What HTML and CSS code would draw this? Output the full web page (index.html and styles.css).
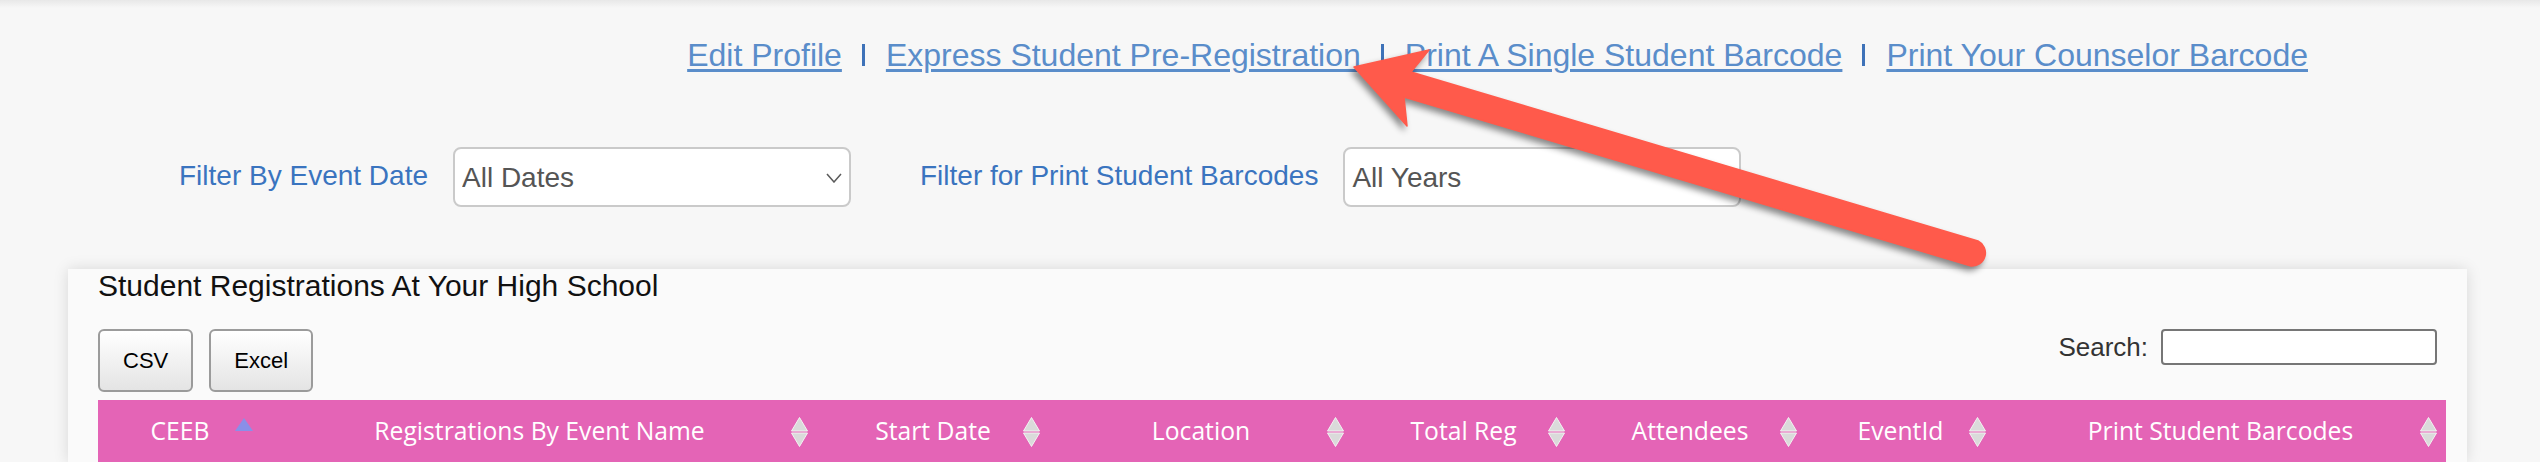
FILE: index.html
```html
<!DOCTYPE html>
<html>
<head>
<meta charset="utf-8">
<title>Counselor</title>
<link rel="stylesheet" href="styles.css">
</head>
<body>
<nav class="links">
  <a class="link" href="#">Edit Profile</a><span class="sep"></span>
  <a class="link" href="#">Express Student Pre-Registration</a><span class="sep"></span>
  <a class="link" href="#">Print A Single Student Barcode</a><span class="sep"></span>
  <a class="link" href="#">Print Your Counselor Barcode</a>
</nav>

<div class="filters">
  <label class="flabel">Filter By Event Date</label>
  <div class="selwrap">
    <select class="sel"><option>All Dates</option></select>
    <svg class="chev" viewBox="0 0 16 10" width="16" height="10"><polyline points="1,1 8,9 15,1"/></svg>
  </div>
  <label class="flabel">Filter for Print Student Barcodes</label>
  <div class="selwrap">
    <select class="sel"><option>All Years</option></select>
    <svg class="chev" viewBox="0 0 16 10" width="16" height="10"><polyline points="1,1 8,9 15,1"/></svg>
  </div>
</div>

<section class="card">
  <div class="card-title">Student Registrations At Your High School</div>
  <div class="toolbar">
    <div class="btns">
      <button class="dtbtn">CSV</button>
      <button class="dtbtn">Excel</button>
    </div>
    <label class="search"><span class="search-label">Search:</span><input class="search-input" type="search"></label>
  </div>
  <table class="grid">
    <colgroup>
      <col class="w1"><col class="w2"><col class="w3"><col class="w4">
      <col class="w5"><col class="w6"><col class="w7"><col class="w8">
    </colgroup>
    <thead>
      <tr>
        <th>CEEB<svg class="asc" viewBox="0 0 18 13" width="18" height="13"><path d="M9 0 L18 13 H0 Z"/></svg></th>
        <th>Registrations By Event Name<svg class="sort" viewBox="0 0 17 30" width="17" height="30"><path d="M8.5 0.5 L16.5 14 H0.5 Z"/><path d="M0.5 16 H16.5 L8.5 29.5 Z"/></svg></th>
        <th>Start Date<svg class="sort" viewBox="0 0 17 30" width="17" height="30"><path d="M8.5 0.5 L16.5 14 H0.5 Z"/><path d="M0.5 16 H16.5 L8.5 29.5 Z"/></svg></th>
        <th>Location<svg class="sort" viewBox="0 0 17 30" width="17" height="30"><path d="M8.5 0.5 L16.5 14 H0.5 Z"/><path d="M0.5 16 H16.5 L8.5 29.5 Z"/></svg></th>
        <th>Total Reg<svg class="sort" viewBox="0 0 17 30" width="17" height="30"><path d="M8.5 0.5 L16.5 14 H0.5 Z"/><path d="M0.5 16 H16.5 L8.5 29.5 Z"/></svg></th>
        <th>Attendees<svg class="sort" viewBox="0 0 17 30" width="17" height="30"><path d="M8.5 0.5 L16.5 14 H0.5 Z"/><path d="M0.5 16 H16.5 L8.5 29.5 Z"/></svg></th>
        <th>EventId<svg class="sort" viewBox="0 0 17 30" width="17" height="30"><path d="M8.5 0.5 L16.5 14 H0.5 Z"/><path d="M0.5 16 H16.5 L8.5 29.5 Z"/></svg></th>
        <th>Print Student Barcodes<svg class="sort" viewBox="0 0 17 30" width="17" height="30"><path d="M8.5 0.5 L16.5 14 H0.5 Z"/><path d="M0.5 16 H16.5 L8.5 29.5 Z"/></svg></th>
      </tr>
    </thead>
  </table>
</section>

<svg class="annot" viewBox="0 0 2540 462" width="2540" height="462">
  <path class="arrow" d="M1354 67 L1429 50 L1411 72 L1978 241 A13.2 13.2 0 0 1 1971 266 L1404 97 L1407 126 Z"/>
</svg>
</body>
</html>
```

FILE: styles.css
```css
html, body {
  margin: 0;
  padding: 0;
}

body {
  position: relative;
  width: 2540px;
  height: 462px;
  overflow: hidden;
  background: linear-gradient(#e8e8e8 0px, #f7f7f7 8px) no-repeat, #f7f7f7;
  font-family: "Liberation Sans", Arial, Helvetica, sans-serif;
}

/* top link row */
.links {
  display: flex;
  justify-content: flex-end;
  align-items: baseline;
  padding: 37px 232px 0 0;
  font-size: 32px;
  line-height: 37px;
}

.link {
  color: #5a8dca;
  text-decoration: underline;
  text-decoration-thickness: 3px;
  text-underline-offset: 3px;
}

.sep {
  display: inline-block;
  width: 3px;
  height: 22px;
  margin: 0 21px 0 20px;
  background: #3e72b8;
}

/* filter row */
.filters {
  display: flex;
  align-items: center;
  margin-top: 73px;
  padding-left: 179px;
  height: 60px;
}

.flabel {
  font-size: 28px;
  color: #3a74bf;
  margin-right: 25px;
  padding-bottom: 3px;
}

.selwrap {
  position: relative;
  width: 398px;
  height: 60px;
  margin-right: 69px;
}

.sel {
  appearance: none;
  -webkit-appearance: none;
  box-sizing: border-box;
  width: 100%;
  height: 100%;
  margin: 0;
  padding: 0 30px 0 7px;
  border: 2px solid #cacaca;
  border-radius: 8px;
  background: #fff;
  font-family: "Liberation Sans", Arial, Helvetica, sans-serif;
  font-size: 28px;
  color: #555;
}

.chev {
  position: absolute;
  right: 9px;
  top: 26px;
}

.chev polyline {
  fill: none;
  stroke: #5a5a5a;
  stroke-width: 1.5;
}

/* card */
.card {
  margin: 62px 73px 0 68px;
  padding: 0 21px 0 30px;
  height: 193px;
  overflow: hidden;
  background: #fafafa;
  box-shadow: 0 0 14px rgba(0, 0, 0, 0.13);
}

.card-title {
  font-size: 30px;
  line-height: 34px;
  color: #111;
}

.toolbar {
  display: flex;
  justify-content: space-between;
  align-items: flex-start;
  margin-top: 26px;
  height: 63px;
  margin-bottom: 8px;
}

.btns {
  display: flex;
  gap: 16px;
}

.dtbtn {
  box-sizing: border-box;
  height: 63px;
  margin: 0;
  padding: 0 23px;
  border: 2px solid #9b9b9b;
  border-radius: 6px;
  background: linear-gradient(#ffffff 0%, #e4e4e4 100%);
  font-family: "Liberation Sans", Arial, Helvetica, sans-serif;
  font-size: 22px;
  color: #000;
}

.search {
  display: flex;
  align-items: center;
  gap: 13px;
  height: 36px;
  margin-right: 9px;
}

.search-label {
  font-size: 26px;
  color: #333;
}

.search-input {
  box-sizing: border-box;
  width: 276px;
  height: 36px;
  margin: 0;
  border: 2px solid #767676;
  border-radius: 4px;
  background: #fff;
}

/* table */
.grid {
  width: 2348px;
  table-layout: fixed;
  border-collapse: collapse;
  border-spacing: 0;
}

.w1 { width: 164px; }
.w2 { width: 555px; }
.w3 { width: 232px; }
.w4 { width: 304px; }
.w5 { width: 221px; }
.w6 { width: 232px; }
.w7 { width: 189px; }
.w8 { width: 451px; }

.grid th {
  position: relative;
  box-sizing: border-box;
  height: 62px;
  padding: 0 10px 1px;
  background: #e464b6;
  color: #fff;
  font-family: "Open Sans", "Noto Sans", sans-serif;
  font-size: 24.7px;
  font-weight: normal;
  text-align: center;
  white-space: nowrap;
}

.sort {
  position: absolute;
  right: 9px;
  top: 17px;
}

.sort path {
  fill: #dadada;
  stroke: #f2f2f2;
  stroke-width: 1;
}

.asc {
  position: absolute;
  right: 9px;
  top: 18px;
}

.asc path {
  fill: #8a8fe8;
}

/* annotation arrow overlay */
.annot {
  position: absolute;
  left: 0;
  top: 0;
  pointer-events: none;
  overflow: visible;
}

.arrow {
  fill: #ff5a4b;
  stroke: #ff5a4b;
  stroke-width: 1.5;
  stroke-linejoin: round;
  filter: drop-shadow(-3px 4px 3px rgba(0, 0, 0, 0.45));
}
```
